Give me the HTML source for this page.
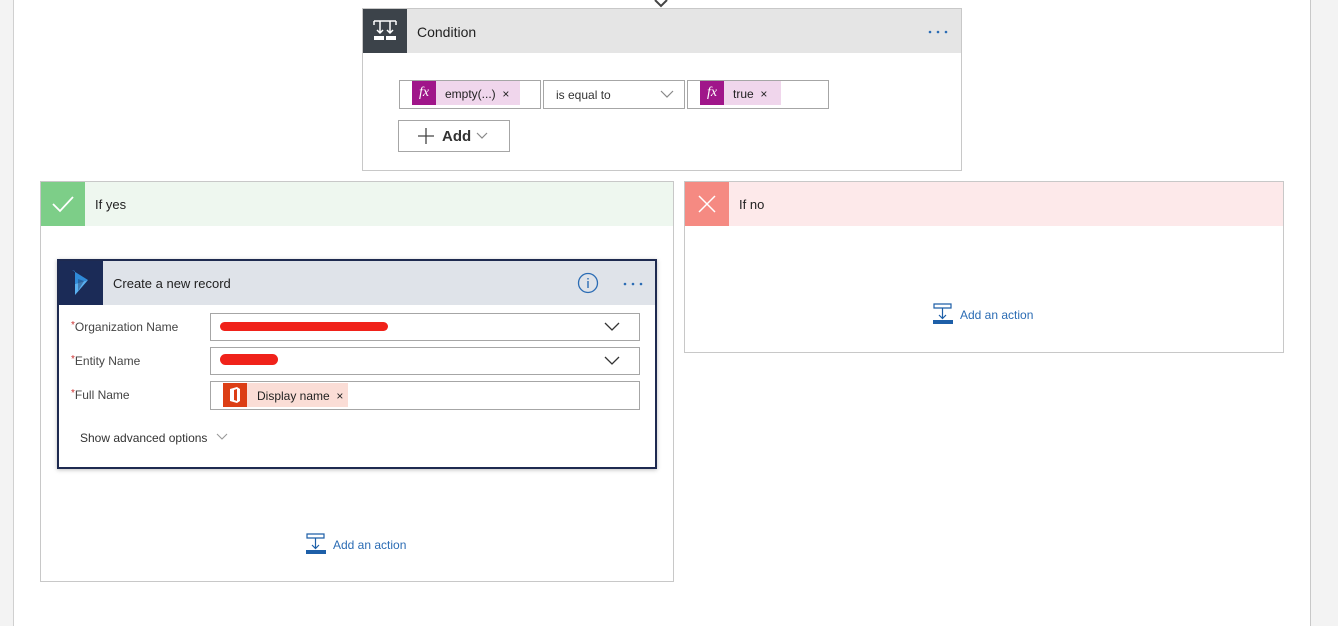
<!DOCTYPE html>
<html><head><meta charset="utf-8"><style>
*{box-sizing:border-box;margin:0;padding:0}
body{width:1338px;height:626px;overflow:hidden;background:#f3f3f3;font-family:"Liberation Sans",sans-serif;font-size:13px;color:#222;position:relative}
.a{position:absolute}
.main{left:13px;top:0;width:1298px;height:626px;background:#fff;border-left:1px solid #d0d0d0;border-right:1px solid #c8c8c8}
.card{border:1px solid #c8c8c8;background:#fff}
.box{border:1px solid #a6a6a6;background:#fff}
.fx{background:#a0168a;color:#fff;font-family:"Liberation Serif",serif;font-style:italic;font-size:14px;text-align:center;line-height:24px}
.tok{background:#f0d6ec;font-size:12px;line-height:26px}
.lbl{font-size:12px;color:#444}
.lbl b{color:#c33;font-weight:normal;font-size:10px;vertical-align:top}
.link{color:#2b6cb4;font-size:12px}
.dots{position:absolute;width:4px;height:4px}
</style></head><body>
<div class="a main"></div>
<svg class="a" style="left:652px;top:0" width="18" height="10"><path d="M3 0 L9 6 L15 0" fill="none" stroke="#444" stroke-width="2"/></svg>

<!-- Condition -->
<div class="a card" style="left:362px;top:8px;width:600px;height:163px"></div>
<div class="a" style="left:363px;top:9px;width:598px;height:44px;background:#e5e5e5"></div>
<div class="a" style="left:363px;top:9px;width:44px;height:44px;background:#3c434a"></div>
<svg class="a" style="left:371px;top:17px" width="28" height="28"><g stroke="#fff" fill="none" stroke-width="1.5"><path d="M3 4H25M3 4V8M25 4V8M9 4V16M19 4V16M6 13L9 16L12 13M16 13L19 16L22 13"/></g><rect x="3" y="19" width="10" height="4" fill="#fff"/><rect x="15" y="19" width="10" height="4" fill="#fff"/></svg>
<div class="a" style="left:417px;top:24px;font-size:14px;color:#222">Condition</div>
<svg class="a" style="left:928px;top:30px" width="22" height="4"><circle cx="2" cy="2" r="1.3" fill="#2b6cb4"/><circle cx="10" cy="2" r="1.3" fill="#2b6cb4"/><circle cx="18" cy="2" r="1.3" fill="#2b6cb4"/></svg>

<div class="a box" style="left:399px;top:80px;width:142px;height:29px"></div>
<div class="a fx" style="left:412px;top:81px;width:24px;height:24px">fx</div>
<div class="a tok" style="left:436px;top:81px;width:84px;height:24px;padding-left:9px">empty(...) &nbsp;×</div>
<div class="a box" style="left:543px;top:80px;width:142px;height:29px"></div>
<div class="a" style="left:556px;top:88px;font-size:12px;color:#333">is equal to</div>
<svg class="a" style="left:660px;top:90px" width="14" height="9"><path d="M1 1L7 7L13 1" fill="none" stroke="#888" stroke-width="1.2"/></svg>
<div class="a box" style="left:687px;top:80px;width:142px;height:29px"></div>
<div class="a fx" style="left:700px;top:81px;width:24px;height:24px">fx</div>
<div class="a tok" style="left:724px;top:81px;width:57px;height:24px;padding-left:9px">true &nbsp;×</div>
<div class="a box" style="left:398px;top:120px;width:112px;height:32px"></div>
<svg class="a" style="left:418px;top:128px" width="16" height="16"><path d="M8 0V16M0 8H16" stroke="#444" stroke-width="1.3"/></svg>
<div class="a" style="left:442px;top:128px;font-size:15px;color:#333;font-weight:bold">Add</div>
<svg class="a" style="left:476px;top:132px" width="12" height="8"><path d="M1 1L6 6L11 1" fill="none" stroke="#888" stroke-width="1.2"/></svg>

<!-- If yes -->
<div class="a card" style="left:40px;top:181px;width:634px;height:401px"></div>
<div class="a" style="left:41px;top:182px;width:632px;height:44px;background:#eef7ef"></div>
<div class="a" style="left:41px;top:182px;width:44px;height:44px;background:#7dce88"></div>
<svg class="a" style="left:51px;top:193px" width="24" height="22"><path d="M2 11L9 18L22 4" fill="none" stroke="#fff" stroke-width="1.8"/></svg>
<div class="a" style="left:95px;top:197px;font-size:13px">If yes</div>

<!-- Create record -->
<div class="a" style="left:57px;top:259px;width:600px;height:210px;border:2px solid #1e2a50;background:#fff;box-shadow:0 1px 4px rgba(0,0,0,.25)"></div>
<div class="a" style="left:59px;top:261px;width:596px;height:44px;background:#dfe3e9"></div>
<div class="a" style="left:59px;top:261px;width:44px;height:44px;background:#1b2b57"></div>
<svg class="a" style="left:70px;top:269px" width="22" height="28"><path d="M2 1L5 2V15L18 11Z" fill="#2f8ad8"/><path d="M5 15L18 11L5 26Z" fill="#5ab0f0"/><path d="M8 10L14 12L8 22Z" fill="#1b2b57" opacity=".4"/></svg>
<div class="a" style="left:113px;top:276px;font-size:13px">Create a new record</div>
<svg class="a" style="left:577px;top:272px" width="22" height="22"><circle cx="11" cy="11" r="9.5" fill="none" stroke="#2b6cb4" stroke-width="1.3"/><path d="M11 9V16M11 6V7.5" stroke="#2b6cb4" stroke-width="1.4"/></svg>
<svg class="a" style="left:623px;top:282px" width="22" height="4"><circle cx="2" cy="2" r="1.3" fill="#2b6cb4"/><circle cx="10" cy="2" r="1.3" fill="#2b6cb4"/><circle cx="18" cy="2" r="1.3" fill="#2b6cb4"/></svg>

<div class="a lbl" style="left:71px;top:320px"><b>*</b>Organization Name</div>
<div class="a box" style="left:210px;top:313px;width:430px;height:28px"></div>
<div class="a" style="left:220px;top:322px;width:168px;height:9px;background:#f0221a;border-radius:5px"></div>
<svg class="a" style="left:604px;top:322px" width="16" height="10"><path d="M1 1L8 8L15 1" fill="none" stroke="#333" stroke-width="1.3"/></svg>
<div class="a lbl" style="left:71px;top:354px"><b>*</b>Entity Name</div>
<div class="a box" style="left:210px;top:347px;width:430px;height:28px"></div>
<div class="a" style="left:220px;top:354px;width:58px;height:11px;background:#f0221a;border-radius:6px"></div>
<svg class="a" style="left:604px;top:356px" width="16" height="10"><path d="M1 1L8 8L15 1" fill="none" stroke="#333" stroke-width="1.3"/></svg>
<div class="a lbl" style="left:71px;top:388px"><b>*</b>Full Name</div>
<div class="a box" style="left:210px;top:381px;width:430px;height:29px"></div>
<div class="a" style="left:223px;top:383px;width:24px;height:24px;background:#dc3e15"></div>
<svg class="a" style="left:227px;top:386px" width="16" height="18"><path d="M3 3L10 1L13 3V15L10 17L3 15ZM7 4V14L10 15V3Z" fill="#fff"/></svg>
<div class="a tok" style="left:247px;top:383px;width:101px;height:24px;padding-left:10px;background:#fbddd6">Display name &nbsp;×</div>
<div class="a lbl" style="left:80px;top:431px;color:#333">Show advanced options</div>
<svg class="a" style="left:216px;top:433px" width="12" height="8"><path d="M1 1L6 6L11 1" fill="none" stroke="#999" stroke-width="1.1"/></svg>

<svg class="a" style="left:305px;top:533px" width="22" height="22"><path d="M2 1H19V5H2Z" fill="none" stroke="#1d5fa8" stroke-width="1.2"/><path d="M10.5 5V15M7 12L10.5 15.5L14 12" fill="none" stroke="#1d5fa8" stroke-width="1.2"/><rect x="1" y="17" width="20" height="4" fill="#1d5fa8"/></svg>
<div class="a link" style="left:333px;top:538px">Add an action</div>

<!-- If no -->
<div class="a card" style="left:684px;top:181px;width:600px;height:172px"></div>
<div class="a" style="left:685px;top:182px;width:598px;height:44px;background:#fde9ea"></div>
<div class="a" style="left:685px;top:182px;width:44px;height:44px;background:#f58a82"></div>
<svg class="a" style="left:697px;top:194px" width="20" height="20"><path d="M2 2L18 18M18 2L2 18" stroke="#fff" stroke-width="1.5"/></svg>
<div class="a" style="left:739px;top:197px;font-size:13px">If no</div>
<svg class="a" style="left:932px;top:303px" width="22" height="22"><path d="M2 1H19V5H2Z" fill="none" stroke="#1d5fa8" stroke-width="1.2"/><path d="M10.5 5V15M7 12L10.5 15.5L14 12" fill="none" stroke="#1d5fa8" stroke-width="1.2"/><rect x="1" y="17" width="20" height="4" fill="#1d5fa8"/></svg>
<div class="a link" style="left:960px;top:308px">Add an action</div>
</body></html>
